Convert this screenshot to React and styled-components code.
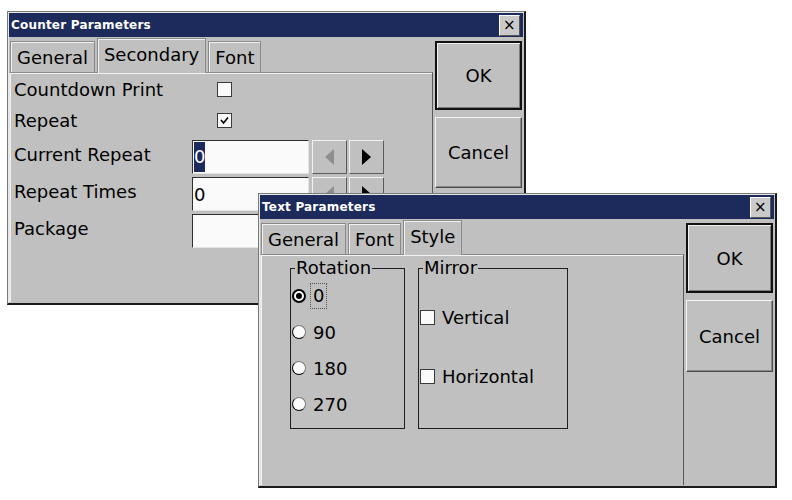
import React from 'react';
import styled, { createGlobalStyle } from 'styled-components';

const GlobalStyle = createGlobalStyle`
  html, body {
    margin: 0;
    padding: 0;
    background: #fff;
  }
  body {
    font-family: "DejaVu Sans", Verdana, sans-serif;
    color: #000;
  }
`;

const Desktop = styled.div`
  position: relative;
  width: 792px;
  height: 500px;
  background: #fff;
  overflow: hidden;
`;

const Window = styled.div`
  position: absolute;
  z-index: ${p => p.$z};
  left: ${p => p.$x}px;
  top: ${p => p.$y}px;
  width: ${p => p.$w}px;
  height: ${p => p.$h}px;
  box-sizing: border-box;
  background: #c0c0c0;
  border: 1px solid #7a7a7a;
  border-right: 2px solid #1a1a1a;
  border-bottom: 2px solid #1a1a1a;
  box-shadow: inset 1px 1px 0 #e8e8e8;
  padding: 1px;
  display: flex;
  flex-direction: column;
`;

const TitleBar = styled.div`
  height: 24px;
  flex: none;
  background: #1c2b5b;
  color: #fff;
  display: flex;
  align-items: center;
  justify-content: space-between;
  padding: 0 3px 0 2px;
  font: bold 12px "DejaVu Sans", sans-serif;
  letter-spacing: 0.2px;
`;

const CloseBox = styled.div`
  width: 21px;
  height: 21px;
  box-sizing: border-box;
  background: #cacaca;
  border: 1px solid;
  border-color: #fff #555 #555 #fff;
  color: #000;
  display: flex;
  align-items: center;
  justify-content: center;
  font: 15px "DejaVu Sans", sans-serif;
`;

const Body = styled.div`
  flex: 1;
  display: flex;
  gap: 2px;
`;

const Main = styled.div`
  width: 424px;
  display: flex;
  flex-direction: column;
`;

const TabStrip = styled.div`
  height: 35px;
  flex: none;
  display: flex;
  align-items: flex-end;
  gap: 2px;
  padding-left: 1px;
`;

const Tab = styled.div`
  height: ${p => (p.$active ? 35 : 31)}px;
  box-sizing: border-box;
  padding: 0 6px ${p => (p.$active ? 4 : 0)}px;
  border: 1px solid #8a8a8a;
  border-bottom: none;
  box-shadow: inset 1px 1px 0 #f2f2f2;
  background: #c0c0c0;
  display: flex;
  align-items: center;
  font-size: 18px;
  position: relative;
  z-index: ${p => (p.$active ? 2 : 0)};
  margin-bottom: ${p => (p.$active ? -1 : 0)}px;
`;

const Panel = styled.div`
  flex: 1;
  box-sizing: border-box;
  border-top: 1px solid #8a8a8a;
  border-left: 1px solid #e6e6e6;
  border-right: 1px solid #5a5a5a;
  box-shadow: inset 1px 1px 0 #f2f2f2;
  position: relative;
  z-index: 1;
  font-size: 18px;
`;

const ButtonColumn = styled.div`
  width: 87px;
  display: flex;
  flex-direction: column;
  gap: 7px;
  padding-top: 4px;
`;

const PushButton = styled.div`
  height: ${p => p.$h}px;
  box-sizing: border-box;
  border: ${p => (p.$default ? '2px solid #111' : '1px solid')};
  border-color: ${p => (p.$default ? '#111' : '#f4f4f4 #4a4a4a #4a4a4a #f4f4f4')};
  box-shadow: ${p =>
    p.$default ? 'inset 1px 1px 0 #f2f2f2, inset -1px -1px 0 #7a7a7a' : 'inset -1px -1px 0 #8a8a8a'};
  display: flex;
  align-items: center;
  justify-content: center;
  font-size: 18px;
`;

/* Counter window rows */
const FormBody = styled.div`
  padding: 1px 0 0 4px;
  display: flex;
  flex-direction: column;
`;

const Row = styled.div`
  display: grid;
  grid-template-columns: 178px auto;
  align-items: center;
  height: ${p => p.$h}px;
  margin-top: ${p => p.$mt || 0}px;
`;

const Label = styled.div`
  padding-bottom: ${p => p.$lift || 0}px;
  white-space: nowrap;
`;

const Controls = styled.div`
  display: flex;
  align-items: center;
  gap: 2px;
`;

const CheckBox = styled.div`
  width: 15px;
  height: 15px;
  box-sizing: border-box;
  background: #fafafa;
  border: 1px solid #3a3a3a;
  margin-left: ${p => p.$ml || 0}px;
  display: flex;
  align-items: center;
  justify-content: center;
  flex: none;
`;

const TextBox = styled.div`
  width: 117px;
  height: 34px;
  box-sizing: border-box;
  background: #fafafa;
  border-top: 1px solid #303030;
  border-left: 1px solid #303030;
  border-bottom: 1px solid #e4e4e4;
  border-right: 1px solid #e4e4e4;
  margin-right: 1px;
  padding-left: 1px;
  display: flex;
  align-items: center;
  font-size: 18px;
`;

const Selected = styled.span`
  background: #1c2b5b;
  color: #fff;
  padding: 4px 0;
  line-height: 22px;
`;

const SpinButton = styled.div`
  width: 35px;
  height: 34px;
  box-sizing: border-box;
  border: 1px solid;
  border-color: #f2f2f2 #5a5a5a #5a5a5a #f2f2f2;
  display: flex;
  align-items: center;
  justify-content: center;
`;

const Arrow = styled.div`
  width: 0;
  height: 0;
  border-top: 8px solid transparent;
  border-bottom: 8px solid transparent;
  ${p =>
    p.$dir === 'left'
      ? `border-right: 9px solid ${p.$disabled ? '#8e8e8e' : '#000'};`
      : `border-left: 9px solid ${p.$disabled ? '#8e8e8e' : '#000'};`}
`;

/* Text window groups */
const StyleBody = styled.div`
  display: flex;
  gap: 13px;
  padding: 3px 0 0 29px;
`;

const Group = styled.fieldset`
  margin: 0;
  padding: 0 1px;
  min-width: 0;
  width: ${p => p.$w}px;
  height: 171px;
  box-sizing: border-box;
  border: 1px solid #1e1e1e;
`;

const Legend = styled.legend`
  padding: 0 1px;
  margin-left: 3px;
  font-size: 18px;
  line-height: 20px;
`;

const Option = styled.div`
  display: flex;
  align-items: center;
  gap: 7px;
  height: ${p => p.$h}px;
  margin-top: ${p => p.$mt || 0}px;
`;

const Radio = styled.div`
  width: 14px;
  height: 14px;
  box-sizing: border-box;
  border-radius: 50%;
  background: #fbfbfb;
  border: 1px solid;
  border-color: #7a7a7a #7a7a7a #000 #000;
  display: flex;
  align-items: center;
  justify-content: center;
  flex: none;
  ${p => p.$checked && 'border: 2px solid #000; box-shadow: 0 0 0 1px #fff inset;'}
`;

const Dot = styled.div`
  width: 6px;
  height: 6px;
  border-radius: 50%;
  background: #000;
`;

const FocusText = styled.span`
  outline: 1px dotted #555;
  outline-offset: 1px;
  padding: 0 1px;
  line-height: 22px;
  margin-left: -1px;
`;

const CheckMark = () => (
  <svg width="11" height="11" viewBox="0 0 11 11">
    <polyline points="2,5 4.5,8 9,2.5" fill="none" stroke="#000" strokeWidth="1.6" />
  </svg>
);

const Close = () => <CloseBox>×</CloseBox>;

export default function App() {
  return (
    <Desktop>
      <GlobalStyle />

      <Window $z={1} $x={7} $y={11} $w={519} $h={294}>
        <TitleBar>
          <span>Counter Parameters</span>
          <Close />
        </TitleBar>
        <Body>
          <Main>
            <TabStrip>
              <Tab>General</Tab>
              <Tab $active>Secondary</Tab>
              <Tab>Font</Tab>
            </TabStrip>
            <Panel>
              <FormBody>
                <Row $h={31}>
                  <Label>Countdown Print</Label>
                  <Controls>
                    <CheckBox $ml={25} />
                  </Controls>
                </Row>
                <Row $h={30}>
                  <Label>Repeat</Label>
                  <Controls>
                    <CheckBox $ml={25}>
                      <CheckMark />
                    </CheckBox>
                  </Controls>
                </Row>
                <Row $h={34} $mt={5}>
                  <Label $lift={6}>Current Repeat</Label>
                  <Controls>
                    <TextBox>
                      <Selected>0</Selected>
                    </TextBox>
                    <SpinButton>
                      <Arrow $dir="left" $disabled />
                    </SpinButton>
                    <SpinButton>
                      <Arrow $dir="right" />
                    </SpinButton>
                  </Controls>
                </Row>
                <Row $h={34} $mt={3}>
                  <Label $lift={6}>Repeat Times</Label>
                  <Controls>
                    <TextBox>0</TextBox>
                    <SpinButton>
                      <Arrow $dir="left" $disabled />
                    </SpinButton>
                    <SpinButton>
                      <Arrow $dir="right" />
                    </SpinButton>
                  </Controls>
                </Row>
                <Row $h={34} $mt={3}>
                  <Label $lift={6}>Package</Label>
                  <Controls>
                    <TextBox />
                  </Controls>
                </Row>
              </FormBody>
            </Panel>
          </Main>
          <ButtonColumn>
            <PushButton $default $h={69}>OK</PushButton>
            <PushButton $h={71}>Cancel</PushButton>
          </ButtonColumn>
        </Body>
      </Window>

      <Window $z={2} $x={258} $y={193} $w={519} $h={295}>
        <TitleBar>
          <span>Text Parameters</span>
          <Close />
        </TitleBar>
        <Body>
          <Main>
            <TabStrip>
              <Tab>General</Tab>
              <Tab>Font</Tab>
              <Tab $active>Style</Tab>
            </TabStrip>
            <Panel>
              <StyleBody>
                <Group $w={115}>
                  <Legend>Rotation</Legend>
                  <Option $h={36}>
                    <Radio $checked>
                      <Dot />
                    </Radio>
                    <FocusText>0</FocusText>
                  </Option>
                  <Option $h={36}>
                    <Radio />
                    <span>90</span>
                  </Option>
                  <Option $h={36}>
                    <Radio />
                    <span>180</span>
                  </Option>
                  <Option $h={36}>
                    <Radio />
                    <span>270</span>
                  </Option>
                </Group>
                <Group $w={150}>
                  <Legend>Mirror</Legend>
                  <Option $h={20} $mt={29}>
                    <CheckBox />
                    <span>Vertical</span>
                  </Option>
                  <Option $h={20} $mt={39}>
                    <CheckBox />
                    <span>Horizontal</span>
                  </Option>
                </Group>
              </StyleBody>
            </Panel>
          </Main>
          <ButtonColumn>
            <PushButton $default $h={70}>OK</PushButton>
            <PushButton $h={72}>Cancel</PushButton>
          </ButtonColumn>
        </Body>
      </Window>
    </Desktop>
  );
}
